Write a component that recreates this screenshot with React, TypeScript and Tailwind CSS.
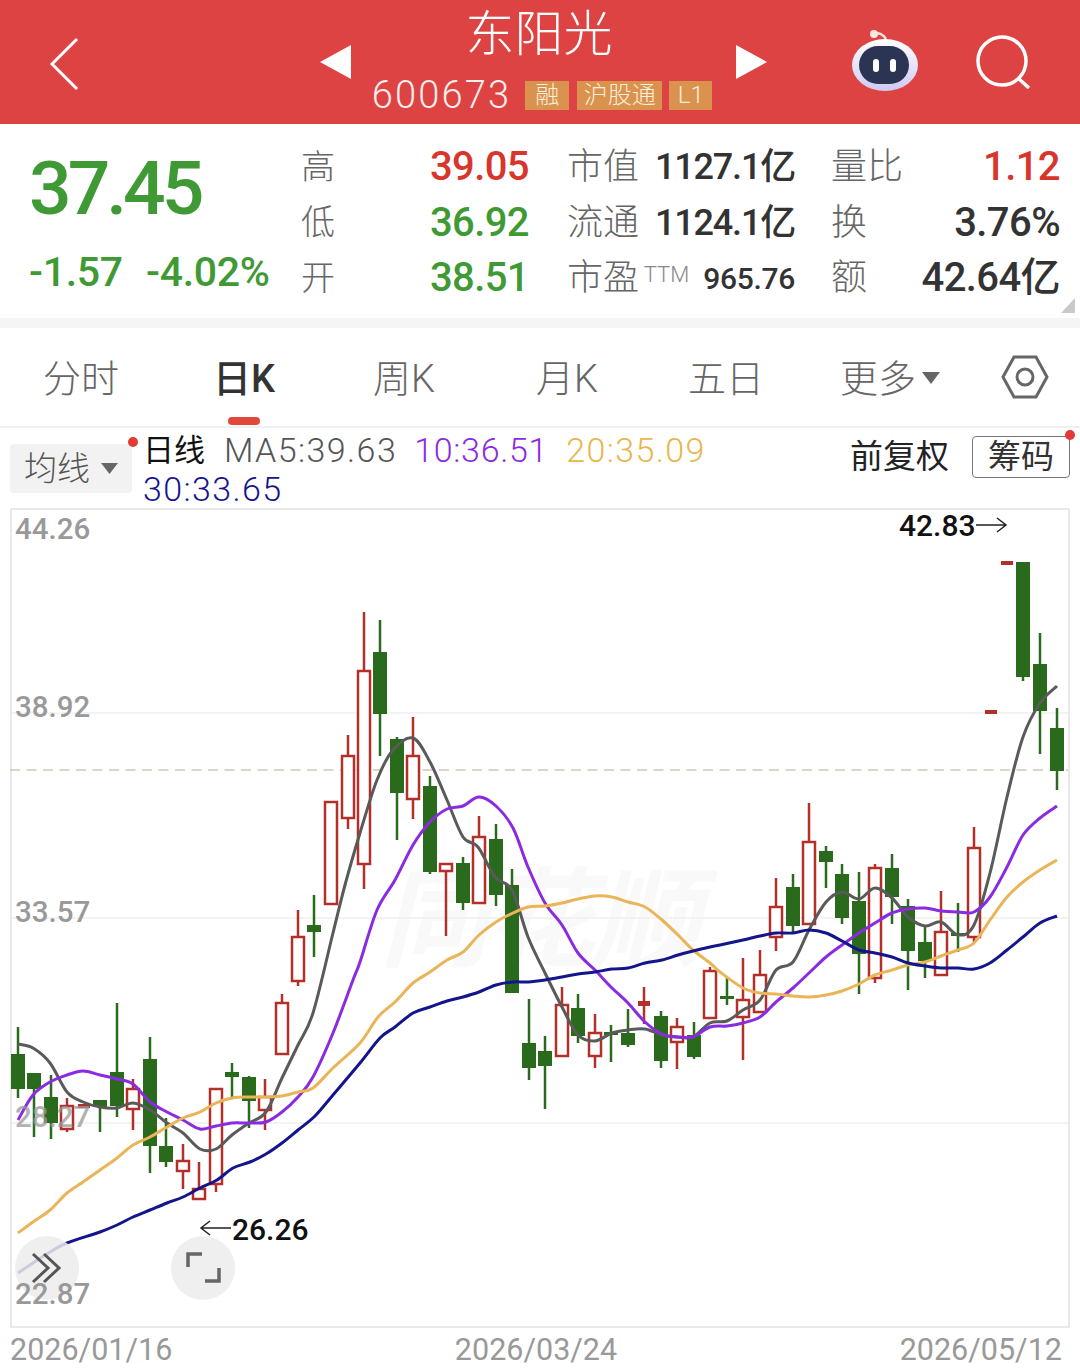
const RED = "#b3302a";
const GREEN = "#2a6a1c";

// x, box top, box bottom, wick top, wick bottom, up candle?
type Candle = [number, number, number, number, number, boolean];

const candles: Candle[] = [
  [18, 1054, 1089, 1027, 1098, false],
  [34, 1073, 1089, 1073, 1137, false],
  [51, 1097, 1123, 1075, 1139, false],
  [67, 1106, 1129, 1098, 1132, true],
  [84, 1104, 1108, 1104, 1108, true],
  [100, 1100, 1107, 1100, 1132, false],
  [117, 1072, 1106, 1003, 1117, false],
  [133, 1089, 1109, 1079, 1130, true],
  [150, 1059, 1146, 1037, 1173, false],
  [166, 1146, 1162, 1118, 1167, false],
  [183, 1161, 1171, 1144, 1189, true],
  [199, 1189, 1199, 1162, 1199, true],
  [216, 1089, 1184, 1089, 1192, true],
  [232, 1072, 1077, 1063, 1098, false],
  [249, 1077, 1101, 1076, 1128, false],
  [265, 1097, 1110, 1079, 1130, true],
  [282, 1003, 1054, 994, 1054, true],
  [298, 937, 981, 910, 986, true],
  [314, 925, 932, 895, 957, false],
  [331, 802, 904, 802, 905, true],
  [348, 756, 818, 735, 829, true],
  [364, 671, 864, 612, 889, true],
  [380, 652, 714, 620, 756, false],
  [397, 739, 793, 737, 840, false],
  [413, 756, 799, 717, 819, true],
  [430, 786, 872, 776, 874, false],
  [446, 864, 871, 864, 936, true],
  [463, 863, 903, 857, 910, false],
  [479, 837, 903, 816, 903, true],
  [496, 839, 895, 824, 906, false],
  [512, 885, 993, 869, 993, false],
  [529, 1043, 1068, 999, 1080, false],
  [545, 1051, 1066, 1036, 1109, false],
  [562, 1005, 1056, 987, 1056, true],
  [578, 1008, 1036, 994, 1043, false],
  [595, 1033, 1056, 1014, 1068, true],
  [611, 1032, 1034, 1025, 1062, false],
  [628, 1033, 1045, 1009, 1047, false],
  [644, 1001, 1006, 987, 1024, true],
  [661, 1016, 1061, 1011, 1068, false],
  [677, 1027, 1042, 1018, 1069, true],
  [694, 1035, 1057, 1022, 1059, false],
  [710, 971, 1018, 967, 1018, true],
  [727, 996, 999, 977, 1005, false],
  [743, 1000, 1017, 958, 1060, true],
  [760, 975, 1012, 950, 1012, true],
  [776, 907, 937, 878, 951, true],
  [793, 887, 926, 874, 933, false],
  [809, 842, 924, 803, 924, true],
  [826, 851, 862, 846, 888, false],
  [842, 874, 918, 864, 924, false],
  [859, 901, 954, 872, 994, false],
  [875, 868, 978, 864, 983, true],
  [892, 868, 897, 854, 924, false],
  [908, 906, 951, 899, 990, false],
  [925, 942, 961, 926, 978, false],
  [941, 932, 975, 891, 975, true],
  [958, 933, 936, 903, 952, false],
  [974, 848, 937, 827, 943, true],
  [991, 710, 714, 710, 714, true],
  [1007, 561, 565, 561, 565, true],
  [1023, 562, 677, 562, 681, false],
  [1040, 664, 711, 633, 754, false],
  [1057, 728, 771, 708, 790, false],
];

const ma5 =
  "18,1044 33,1048 50,1063 67,1092 83,1102 100,1107 117,1108 133,1103 150,1110 167,1123 183,1133 200,1149 216,1149 232,1135 249,1123 266,1112 282,1078 298,1045 313,1013 333,933 345,885 360,833 377,780 393,750 413,738 430,762 447,800 463,837 478,847 495,877 512,890 528,937 545,973 562,1007 578,1035 595,1041 612,1033 628,1030 645,1029 662,1035 678,1037 693,1037 710,1023 727,1021 743,1010 760,1000 776,970 793,962 809,930 826,902 842,892 859,899 875,888 892,898 908,917 925,926 941,922 958,935 974,925 990,873 1007,797 1023,737 1040,703 1057,686";
const ma10 =
  "18,1120 33,1095 50,1082 67,1075 83,1071 100,1075 117,1079 133,1084 150,1102 167,1112 183,1120 200,1129 216,1126 232,1123 249,1123 266,1122 282,1112 298,1097 313,1077 333,1033 353,980 360,962 377,910 395,880 413,845 430,822 447,809 463,806 479,797 496,806 513,828 528,867 545,903 562,925 578,953 595,970 612,988 628,1003 645,1022 662,1034 678,1037 693,1037 710,1027 727,1026 743,1023 760,1017 776,1002 793,988 809,973 826,957 842,945 859,933 875,923 892,913 908,909 925,908 941,911 958,912 974,912 990,897 1007,867 1023,835 1040,818 1057,806";
const ma20 =
  "18,1233 33,1222 50,1210 67,1193 83,1182 100,1170 117,1158 133,1145 150,1137 167,1127 183,1118 200,1112 216,1103 232,1098 249,1097 266,1097 282,1096 298,1092 313,1088 333,1068 360,1043 378,1017 395,1002 413,983 430,972 447,960 463,952 479,935 496,922 513,913 528,907 545,906 562,903 578,899 595,896 612,897 628,902 645,907 662,920 678,935 693,950 710,963 720,972 743,988 760,993 776,994 793,996 809,997 826,995 842,991 859,984 875,975 892,970 908,965 925,962 941,956 958,950 974,943 990,920 1007,897 1023,882 1040,870 1057,860";
const ma30 =
  "18,1273 33,1263 50,1252 67,1243 100,1232 117,1225 133,1217 150,1210 167,1203 183,1197 200,1188 217,1180 233,1168 250,1162 266,1154 282,1143 298,1130 315,1116 333,1095 360,1063 380,1038 395,1027 413,1013 430,1007 447,1001 463,997 479,992 496,985 513,982 528,982 545,980 562,977 578,974 595,972 612,969 628,968 645,963 662,960 678,955 693,951 710,947 720,945 743,940 760,936 776,933 793,933 809,930 826,933 842,941 859,950 875,953 892,957 908,963 925,966 941,968 958,968 974,969 990,963 1007,950 1023,937 1040,923 1057,916";

// catmull-rom through the points, the app's lines are slightly rounded
function smooth(points: string): string {
  const p = points.split(" ").map((s) => s.split(",").map(Number));
  let d = `M${p[0][0]} ${p[0][1]}`;
  for (let i = 0; i < p.length - 1; i++) {
    const a = p[Math.max(i - 1, 0)];
    const b = p[i];
    const c = p[i + 1];
    const e = p[Math.min(i + 2, p.length - 1)];
    const c1x = b[0] + (c[0] - a[0]) / 6;
    const c1y = b[1] + (c[1] - a[1]) / 6;
    const c2x = c[0] - (e[0] - b[0]) / 6;
    const c2y = c[1] - (e[1] - b[1]) / 6;
    d += `C${c1x} ${c1y} ${c2x} ${c2y} ${c[0]} ${c[1]}`;
  }
  return d;
}

const tabs = [
  { label: "分时", w: "w-[162px]" },
  { label: "日K", w: "w-[164px]", active: true },
  { label: "周K", w: "w-[156px]" },
  { label: "月K", w: "w-[170px]" },
  { label: "五日", w: "w-[148px]" },
];

const quoteRows = [
  { a: "高", v: "39.05", vc: "text-[#d8352c]", b: "市值", bv: "1127.1亿", c: "量比", cv: "1.12", cc: "text-[#d8352c]" },
  { a: "低", v: "36.92", vc: "text-[#3f9a35]", b: "流通", bv: "1124.1亿", c: "换", cv: "3.76%", cc: "text-[#333]" },
  { a: "开", v: "38.51", vc: "text-[#3f9a35]", b: "市盈", bv: "965.76", c: "额", cv: "42.64亿", cc: "text-[#333]" },
];

function Header() {
  return (
    <div className="flex h-[124px] items-center bg-[#dd4342] text-white">
      <svg width="30" height="54" viewBox="0 0 30 54" className="mt-[4px] ml-[50px]" fill="none" stroke="#fff" strokeWidth="3">
        <path d="M27 2 2 27l25 25" />
      </svg>
      <svg width="32" height="34" viewBox="0 0 32 34" className="ml-[240px]" fill="#fff">
        <path d="M31 0v34L0 17z" />
      </svg>
      <div className="flex w-[380px] flex-col items-center pt-[3px]">
        <div className="pr-[6px] text-[49px] leading-[50px] font-light">东阳光</div>
        <div className="mt-[13px] flex h-[44px] items-center">
          <span className="mr-[14px] text-[38px] font-light tracking-[2.2px] text-[#fbeeee]">600673</span>
          <span className="mr-[8px] flex h-[29px] w-[44px] items-center justify-center bg-[#d9934f] text-[24px] font-light text-[#fbeedd]">融</span>
          <span className="mr-[7px] flex h-[29px] w-[85px] items-center justify-center bg-[#d9934f] text-[24px] font-light text-[#fbeedd]">沪股通</span>
          <span className="flex h-[29px] w-[43px] items-center justify-center bg-[#d9934f] text-[24px] font-light text-[#fbeedd]">L1</span>
        </div>
      </div>
      <svg width="32" height="34" viewBox="0 0 32 34" className="ml-[4px]" fill="#fff">
        <path d="M0 0v34l31-17z" />
      </svg>
      <svg width="72" height="66" viewBox="0 0 72 66" className="mt-[-2px] ml-[81px]">
        <defs>
          <linearGradient id="robotShell" x1="0" y1="0" x2="0" y2="1">
            <stop offset="0" stopColor="#ffffff" />
            <stop offset="1" stopColor="#cfc9f2" />
          </linearGradient>
        </defs>
        <path d="M26 6c3-2 8 0 11 5" fill="none" stroke="#f6e3e0" strokeWidth="2.5" />
        <circle cx="25" cy="6" r="4" fill="#f8e8e4" />
        <ellipse cx="36" cy="37" rx="33" ry="26" fill="url(#robotShell)" />
        <rect x="10" y="18" width="50" height="38" rx="19" fill="#2b3452" />
        <rect x="24" y="31" width="6" height="13" rx="3" fill="#fff" />
        <rect x="41" y="31" width="6" height="13" rx="3" fill="#fff" />
      </svg>
      <svg width="56" height="54" viewBox="0 0 56 54" className="ml-[54px]" fill="none" stroke="#fff" strokeWidth="3.5">
        <circle cx="27" cy="26" r="24" />
        <path d="m43 43 11 10" />
      </svg>
    </div>
  );
}

function Quote() {
  return (
    <div className="relative flex h-[194px] bg-white">
      <div className="w-[301px] shrink-0 pt-[24px] pl-[29px] text-[#3f9a35]">
        <div className="text-[75px] leading-[80px] font-medium tracking-[-4px]">37.45</div>
        <div className="mt-[22px] flex text-[41px] leading-[44px] font-medium tracking-[-0.3px]">
          <span className="w-[117px]">-1.57</span>
          <span>-4.02%</span>
        </div>
      </div>
      <div className="grid grid-cols-[34px_194px_110px_156px_108px_157px] grid-rows-[55.5px_55.5px_55.5px] pt-[13px]">
        {quoteRows.map((r) => (
          <div key={r.a} className="col-span-6 grid grid-cols-subgrid items-center">
            <span className="text-[34px] font-light text-[#666]">{r.a}</span>
            <span className={`text-right text-[40px] font-medium tracking-[-0.6px] ${r.vc}`}>{r.v}</span>
            <span className="pl-[38px] text-[36px] font-light whitespace-nowrap text-[#666]">{r.b}</span>
            <span className="flex items-center justify-end font-medium whitespace-nowrap text-[#333]">
              {r.b === "市盈" && <span className="mr-[14px] -translate-y-[4px] text-[22px] font-light text-[#888]">TTM</span>}
              <span className={r.b === "市盈" ? "text-[30px] tracking-[-0.3px]" : "text-[36px] tracking-[-1.2px]"}>{r.bv}</span>
            </span>
            <span className="pl-[36px] text-[36px] font-light whitespace-nowrap text-[#666]">{r.c}</span>
            <span className={`text-right text-[40px] font-medium tracking-[-0.6px] whitespace-nowrap ${r.cc}`}>{r.cv}</span>
          </div>
        ))}
      </div>
      <svg width="14" height="15" viewBox="0 0 14 15" className="absolute right-[5px] bottom-[5px]" fill="#c9c9c9">
        <path d="M14 0v15H0z" />
      </svg>
    </div>
  );
}

function Tabs() {
  return (
    <div className="flex h-[100px] items-center border-b-2 border-[#f0f0f0] bg-white">
      {tabs.map((t) => (
        <div
          key={t.label}
          className={`relative flex h-full items-center justify-center pt-[5px] text-[38px] ${t.w} ${t.active ? "font-medium text-[#333]" : "font-light text-[#666]"}`}
        >
          {t.label}
          {t.active && <span className="absolute bottom-[1px] left-1/2 h-[8px] w-[32px] -translate-x-1/2 rounded-[4px] bg-[#e0483c]" />}
        </div>
      ))}
      <div className="flex h-full w-[180px] items-center justify-center pt-[5px] text-[38px] font-light text-[#666]">
        更多
        <svg width="18" height="12" viewBox="0 0 18 12" className="mt-[-4px] ml-[6px]" fill="#666">
          <path d="M0 0h18L9 12z" />
        </svg>
      </div>
      <svg width="48" height="44" viewBox="0 0 48 44" className="ml-[21px]" fill="none" stroke="#666" strokeWidth="3">
        <path d="M2 22 13 2h22l11 20-11 20H13z" />
        <circle cx="24" cy="22" r="8" />
      </svg>
    </div>
  );
}

function Legend() {
  return (
    <div className="flex h-[80px] bg-white pl-[10px]">
      <div className="relative mt-[16px] flex h-[49px] w-[122px] items-center rounded-[4px] bg-[#f2f2f2] pl-[14px] text-[33px] font-light text-[#555]">
        均线
        <svg width="17" height="11" viewBox="0 0 17 11" className="ml-[11px]" fill="#666">
          <path d="M0 0h17L8.5 11z" />
        </svg>
        <span className="absolute top-[-7px] right-[-6px] h-[10px] w-[10px] rounded-full bg-[#e33b33]" />
      </div>
      <div className="ml-[11px] flex flex-col pt-[3px] text-[34px] leading-[39px]">
        <div className="flex items-center">
          <span className="mr-[19px] text-[31px] text-[#111]">日线</span>
          <span className="mr-[17px] font-light tracking-[1.4px] text-[#555]">MA5:39.63</span>
          <span className="mr-[18px] font-light tracking-[0.7px] text-[#8a2be2]">10:36.51</span>
          <span className="font-light tracking-[1.4px] text-[#e8b64e]">20:35.09</span>
        </div>
        <span className="font-light tracking-[1.4px] text-[#14148c]">30:33.65</span>
      </div>
      <span className="mt-[8px] ml-auto text-[33px] leading-[42px] text-[#222]">前复权</span>
      <div className="relative mt-[8px] ml-[23px] flex h-[42px] w-[98px] items-center justify-center rounded-[4px] border border-[#777] text-[33px] text-[#333]">
        筹码
        <span className="absolute top-[-7px] right-[-6px] h-[10px] w-[10px] rounded-full bg-[#e33b33]" />
      </div>
      <div className="w-[10px]" />
    </div>
  );
}

function PriceChart() {
  return (
    <div className="mx-[10px] h-[820px] border-2 border-[#e9e9e9] bg-white">
      <svg viewBox="12 510 1056 816" className="block h-full w-full overflow-visible">
        <text x="380" y="958" fontSize="108" fontStyle="italic" fontWeight="700" fill="#f9f9f9" textLength="320">
          同花顺
        </text>
        {[713, 918, 1123].map((y) => (
          <line key={y} x1="12" x2="1068" y1={y} y2={y} stroke="#efefef" strokeWidth="1.5" />
        ))}
        <line x1="10" x2="1068" y1="770" y2="770" stroke="#cfc9b8" strokeWidth="1.5" strokeDasharray="10 6.5" />

        {candles.map(([x, top, bottom, hi, lo, up]) => {
          const color = up ? RED : GREEN;
          const doji = bottom - top < 6;
          return (
            <g key={x}>
              <line x1={x} x2={x} y1={hi} y2={lo} stroke={color} strokeWidth="2.5" />
              {up && !doji ? (
                <rect x={x - 6} y={top} width="12" height={bottom - top} fill="#fff" stroke={color} strokeWidth="2.5" />
              ) : up ? (
                <rect x={x - 6} y={top} width="12" height={bottom - top} fill={color} />
              ) : (
                <rect x={x - 7} y={top} width="14" height={Math.max(bottom - top, 3)} fill={color} />
              )}
            </g>
          );
        })}

        <g fill="none" strokeWidth="3" strokeLinejoin="round">
          <path d={smooth(ma5)} stroke="#5a5a5a" />
          <path d={smooth(ma10)} stroke="#8a2be2" />
          <path d={smooth(ma20)} stroke="#e9b558" />
          <path d={smooth(ma30)} stroke="#14148c" />
        </g>

        <circle cx="47" cy="1268" r="32" fill="#ececec" fillOpacity="0.85" />
        <path d="m33 1254 15 14-15 14m11-28 15 14-15 14" fill="none" stroke="#555" strokeWidth="3" />
        <circle cx="203" cy="1268" r="32" fill="#efefef" />
        <path d="M188 1267v-13h14m17 14v13h-14" fill="none" stroke="#666" strokeWidth="3.5" />

        <g fontSize="29.5" fontWeight="500" fill="#999">
          <text x="15" y="539">44.26</text>
          <text x="15" y="717">38.92</text>
          <text x="15" y="922">33.57</text>
          <text x="15" y="1127" opacity="0.75">28.27</text>
          <text x="15" y="1304">22.87</text>
        </g>
        <g fontSize="30" fontWeight="500" fill="#111">
          <text x="899" y="536">42.83</text>
          <text x="232" y="1240">26.26</text>
        </g>
        <g fill="none" stroke="#222" strokeWidth="1.5">
          <path d="M976 525h30m-9-7 9 7-9 7" />
          <path d="M231 1228h-30m9-7-9 7 9 7" />
        </g>
      </svg>
    </div>
  );
}

export default function App() {
  return (
    <div className="h-[1372px] w-[1080px] overflow-hidden bg-white font-['Roboto','Noto_Sans_CJK_SC',sans-serif]">
      <Header />
      <Quote />
      <div className="h-[10px] bg-[#f5f5f5]" />
      <Tabs />
      <Legend />
      <PriceChart />
      <div className="flex justify-between pr-[18px] pl-[10px] text-[30.5px] leading-[44px] text-[#999]">
        <span>2026/01/16</span>
        <span>2026/03/24</span>
        <span>2026/05/12</span>
      </div>
    </div>
  );
}
